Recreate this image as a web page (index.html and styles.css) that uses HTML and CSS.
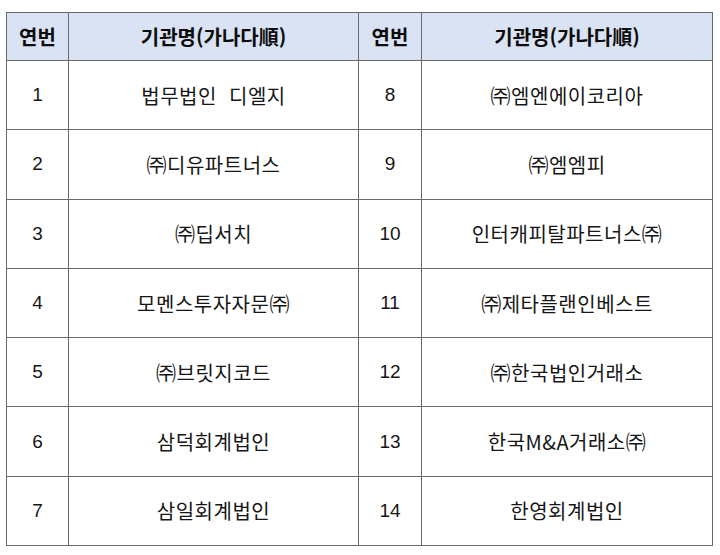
FILE: index.html
```html
<!DOCTYPE html>
<html lang="ko">
<head>
<meta charset="utf-8">
<link rel="stylesheet" href="styles.css">
</head>
<body>
<div class="wrap">
<table class="list">
  <colgroup>
    <col class="c-no"><col class="c-name"><col class="c-no2"><col class="c-name2">
  </colgroup>
  <thead>
    <tr><th>연번</th><th>기관명(가나다順)</th><th>연번</th><th>기관명(가나다順)</th></tr>
  </thead>
  <tbody>
    <tr><td class="num">1</td><td>법무법인&nbsp; 디엘지</td><td class="num">8</td><td>㈜엠엔에이코리아</td></tr>
    <tr><td class="num">2</td><td>㈜디유파트너스</td><td class="num">9</td><td>㈜엠엠피</td></tr>
    <tr><td class="num">3</td><td>㈜딥서치</td><td class="num">10</td><td>인터캐피탈파트너스㈜</td></tr>
    <tr><td class="num">4</td><td>모멘스투자자문㈜</td><td class="num">11</td><td>㈜제타플랜인베스트</td></tr>
    <tr><td class="num">5</td><td>㈜브릿지코드</td><td class="num">12</td><td>㈜한국법인거래소</td></tr>
    <tr><td class="num">6</td><td>삼덕회계법인</td><td class="num">13</td><td>한국M&amp;A거래소㈜</td></tr>
    <tr><td class="num">7</td><td>삼일회계법인</td><td class="num">14</td><td>한영회계법인</td></tr>
  </tbody>
</table>
</div>
</body>
</html>
```

FILE: styles.css
```css
html, body {
  margin: 0;
  padding: 0;
  background: #ffffff;
}
.wrap {
  padding: 12px 0 0 6px;
}
.list {
  border-collapse: collapse;
  table-layout: fixed;
  width: 707px;
  font-family: "Noto Sans CJK KR", "Noto Sans", sans-serif;
  color: #161616;
}
.c-no { width: 62px; }
.c-name { width: 290px; }
.c-no2 { width: 63px; }
.c-name2 { width: 291px; }
.list th, .list td {
  border: 1px solid #6a6a6a;
  text-align: center;
  vertical-align: middle;
  padding: 0;
}
.list th {
  height: 47px;
  background: #dae3f3;
  font-size: 20px;
  font-weight: bold;
  color: #0d0d0d;
}
.list td {
  height: 68.3px;
  font-size: 20px;
  letter-spacing: 0.5px;
}
.list td.num {
  font-family: "Liberation Sans", "Noto Sans", sans-serif;
  letter-spacing: 0;
  font-size: 19px;
}
```
